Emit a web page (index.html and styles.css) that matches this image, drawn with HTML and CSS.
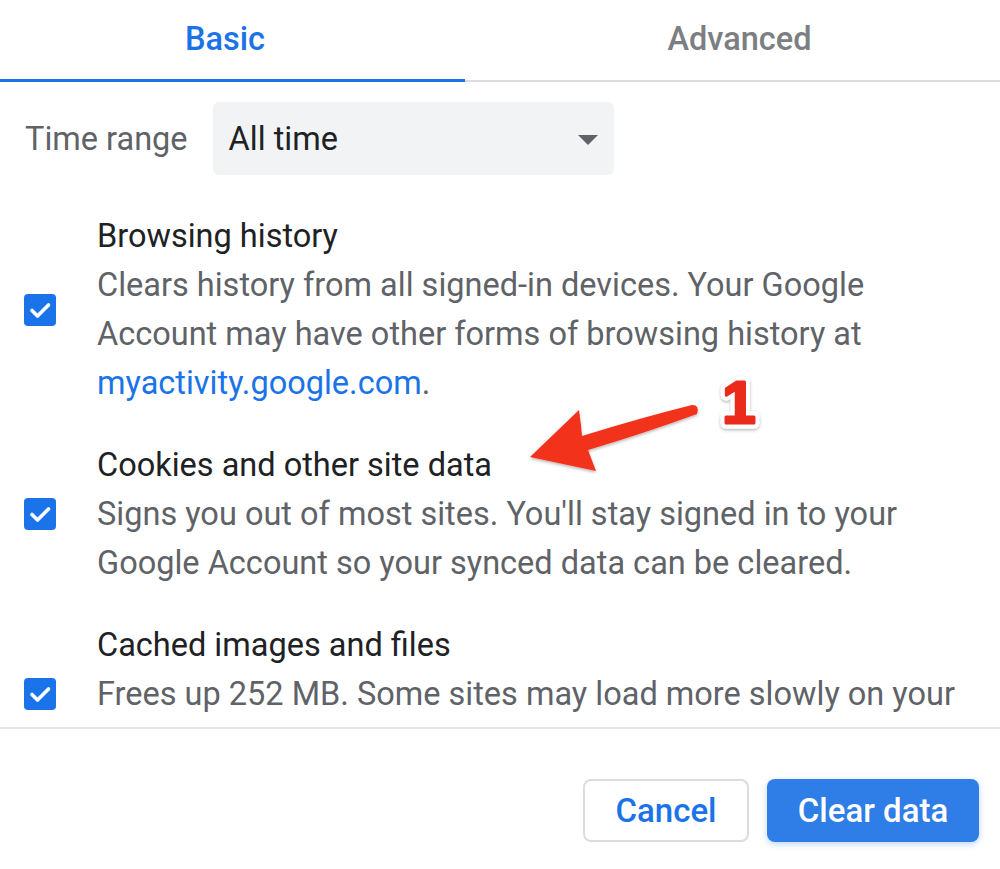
FILE: index.html
```html
<!DOCTYPE html>
<html lang="en">
<head>
    <meta charset="UTF-8">
    <title>Clear browsing data</title>
    <link rel="stylesheet" href="styles.css">
</head>
<body>
    <div class="dialog">
        <div class="tabs">
            <div class="tab tab-basic active">Basic</div>
            <div class="tab tab-advanced">Advanced</div>
        </div>

        <div class="range-row">
            <span class="range-label">Time range</span>
            <div class="range-select">
                <span>All time</span>
                <svg class="caret" width="20" height="10" viewBox="0 0 20 10"><path d="M0 0h20L10 10z" fill="#5f6368"/></svg>
            </div>
        </div>

        <div class="items">
            <div class="item">
                <span class="checkbox"><svg viewBox="0 0 32 32"><path d="M8 16.5l5.5 5.5L24.5 11" fill="none" stroke="#fff" stroke-width="3.6" stroke-linecap="round" stroke-linejoin="round"/></svg></span>
                <div class="item-text">
                    <div class="item-title">Browsing history</div>
                    <div class="item-desc">Clears history from all signed-in devices. Your Google Account may have other forms of browsing history at <a href="#">myactivity.google.com</a>.</div>
                </div>
            </div>
            <div class="item">
                <span class="checkbox"><svg viewBox="0 0 32 32"><path d="M8 16.5l5.5 5.5L24.5 11" fill="none" stroke="#fff" stroke-width="3.6" stroke-linecap="round" stroke-linejoin="round"/></svg></span>
                <div class="item-text">
                    <div class="item-title">Cookies and other site data</div>
                    <div class="item-desc">Signs you out of most sites. You'll stay signed in to your Google Account so your synced data can be cleared.</div>
                </div>
            </div>
            <div class="item">
                <span class="checkbox"><svg viewBox="0 0 32 32"><path d="M8 16.5l5.5 5.5L24.5 11" fill="none" stroke="#fff" stroke-width="3.6" stroke-linecap="round" stroke-linejoin="round"/></svg></span>
                <div class="item-text">
                    <div class="item-title">Cached images and files</div>
                    <div class="item-desc">Frees up 252 MB. Some sites may load more slowly on your next visit.</div>
                </div>
            </div>
        </div>

        <div class="actions">
            <button class="btn btn-cancel">Cancel</button>
            <button class="btn btn-primary">Clear data</button>
        </div>

        <!-- annotation drawn over the dialog -->
        <svg class="annotation" width="1000" height="869" viewBox="0 0 1000 869">
            <defs>
                <filter id="soft" x="-20%" y="-20%" width="140%" height="140%">
                    <feDropShadow dx="0" dy="1.5" stdDeviation="1.5" flood-color="#000" flood-opacity="0.3"/>
                </filter>
            </defs>
            <path d="M530 457 L579 410 Q581 424 582 436 Q640 418 692 405 Q700 405 697 414 Q645 433 588 450 L596 471 Z" fill="#f3321c" filter="url(#soft)"/>
            <text x="739" y="423" text-anchor="middle" class="step-num step-outline" filter="url(#soft)">1</text>
            <text x="739" y="423" text-anchor="middle" class="step-num">1</text>
        </svg>
    </div>
</body>
</html>
```

FILE: styles.css
```css
* {
    box-sizing: border-box;
}
body {
    margin: 0;
    background: #fff;
    font-family: Roboto, "Liberation Sans", sans-serif;
    color: #202124;
    overflow: hidden;
}
.dialog {
    position: relative;
    width: 1000px;
    height: 869px;
    display: flex;
    flex-direction: column;
}
.tabs {
    display: grid;
    grid-template-columns: 465px 1fr;
    height: 82px;
    border-bottom: 2px solid #dadce0;
}
.tab {
    display: flex;
    align-items: center;
    justify-content: center;
    font-size: 32.5px;
    font-weight: 500;
    color: #7b7e82;
    padding-bottom: 2px;
}
.tab-basic {
    padding-right: 15px;
}
.tab-advanced {
    padding-left: 14px;
}
.tab.active {
    color: #1a73e8;
    border-bottom: 3px solid #1a73e8;
    margin-bottom: -2px;
}
.range-row {
    display: flex;
    align-items: center;
    gap: 25px;
    padding: 20px 0 0 25px;
}
.range-label {
    font-size: 32.5px;
    color: #5f6368;
}
.range-select {
    width: 401px;
    height: 73px;
    background: #f1f3f4;
    border-radius: 6px;
    display: flex;
    align-items: center;
    justify-content: space-between;
    padding: 0 16px;
    font-size: 32.5px;
    color: #202124;
}
.caret {
    display: block;
    margin-top: 2px;
}
.items {
    height: 554px;
    overflow: hidden;
    padding-top: 20px;
    border-bottom: 2px solid #e3e4e6;
}
.item {
    display: flex;
    align-items: center;
    gap: 41px;
    padding: 16.5px 25px 16.5px 24px;
}
.checkbox {
    flex: none;
    width: 32px;
    height: 32px;
    border-radius: 4px;
    background: #1a73e8;
}
.checkbox svg {
    display: block;
    width: 32px;
    height: 32px;
}
.item-text {
    flex: 1;
    font-size: 32.5px;
    line-height: 49px;
}
.item-title {
    color: #202124;
}
.item-desc {
    color: #5f6368;
}
.item-desc a {
    color: #1a73e8;
    text-decoration: none;
}
.actions {
    display: flex;
    justify-content: flex-end;
    gap: 18px;
    padding: 50px 21px 0 0;
}
.btn {
    height: 63px;
    border-radius: 8px;
    font-family: Roboto, "Liberation Sans", sans-serif;
    font-size: 33px;
    font-weight: 500;
    cursor: pointer;
}
.btn-cancel {
    width: 166px;
    background: #fff;
    color: #1a73e8;
    border: 2px solid #dadce0;
}
.btn-primary {
    width: 212px;
    background: #2f7de6;
    color: #fff;
    border: none;
    box-shadow: 0 2px 6px rgba(26, 115, 232, 0.3);
}
.annotation {
    position: absolute;
    left: 0;
    top: 0;
    pointer-events: none;
}
.step-num {
    font-family: "Liberation Sans", Arial, sans-serif;
    font-weight: bold;
    font-size: 60px;
    fill: #ec2a1b;
    stroke: #ec2a1b;
    stroke-width: 3px;
    stroke-linejoin: round;
}
.step-outline {
    stroke: #fff;
    stroke-width: 11px;
}
```
